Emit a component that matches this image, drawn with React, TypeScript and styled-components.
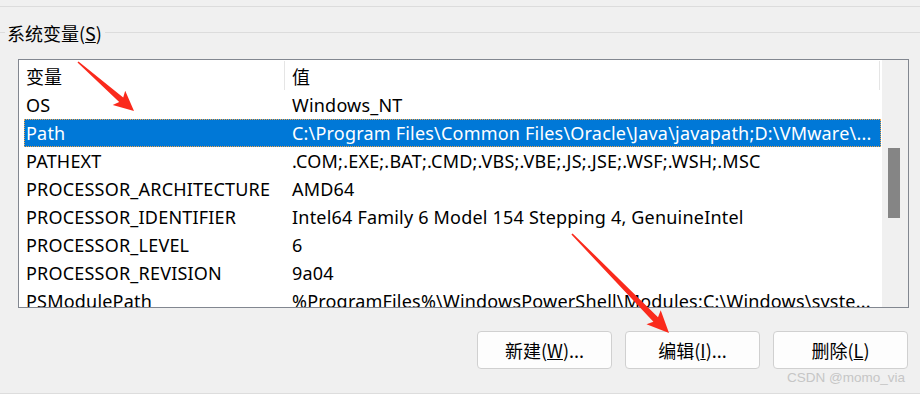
import React from "react";
import styled, { createGlobalStyle } from "styled-components";

const Global = createGlobalStyle`
  html, body { margin: 0; padding: 0; background: #f0f0f0; }
  body { font-family: "Noto Sans", "Noto Sans CJK SC", sans-serif; }
`;

const Page = styled.div`
  position: relative;
  width: 920px;
  height: 394px;
  box-sizing: border-box;
  background: #f0f0f0;
  border-bottom: 1px solid #dddddd;
  overflow: hidden;
  font-family: "Noto Sans", "Noto Sans CJK SC", sans-serif;
  font-size: 18px;
  color: #000;
`;

const TopRule = styled.div`
  height: 1px;
  margin-top: 6px;
  background: #dcdcdc;
`;

const GroupHeader = styled.div`
  display: flex;
  align-items: center;
  height: 18px;
  margin-top: 17px;
  &::before {
    content: "";
    width: 5px;
    height: 1px;
    margin-top: -2px;
    margin-right: 2px;
    background: #dcdcdc;
  }
  &::after {
    content: "";
    flex: 1;
    height: 1px;
    margin-top: -2px;
    margin-left: 3px;
    background: #dcdcdc;
  }
`;

const Legend = styled.span`
  font-family: "Noto Sans CJK SC", sans-serif;
  font-size: 18px;
  line-height: 18px;
  white-space: nowrap;
`;

const ListBox = styled.div`
  display: flex;
  box-sizing: border-box;
  width: 891px;
  height: 249px;
  margin: 17px 0 0 18px;
  border: 1px solid #828790;
  background: #ffffff;
  overflow: hidden;
`;

const ListArea = styled.div`
  flex: 1;
  min-width: 0;
  overflow: hidden;
`;

const HeaderRow = styled.div`
  display: grid;
  grid-template-columns: 266px 1fr;
  height: 31px;
  padding-right: 1px;
`;

const HeaderCell = styled.div`
  display: flex;
  align-items: center;
  padding-left: 7px;
  font-family: "Noto Sans CJK SC", sans-serif;
  font-size: 18px;
  border-right: 1px solid #e5e5e5;
  margin: 1px 0 1px;
`;

const Row = styled.div<{ $selected?: boolean }>`
  display: grid;
  grid-template-columns: 261px 1fr;
  box-sizing: border-box;
  height: 28px;
  margin-left: 5px;
  background: ${(p) => (p.$selected ? "#0078d7" : "transparent")};
  color: ${(p) => (p.$selected ? "#ffffff" : "#000000")};
  outline: ${(p) => (p.$selected ? "1px dotted #f3a649" : "none")};
  outline-offset: -1px;
`;

const Cell = styled.div<{ $value?: boolean }>`
  display: flex;
  align-items: center;
  padding-left: ${(p) => (p.$value ? "7px" : "2px")};
  white-space: nowrap;
  overflow: hidden;
  font-size: 18px;
  letter-spacing: 0.2px;
`;

const ScrollTrack = styled.div`
  position: relative;
  width: 26px;
  background: #f0f0f0;
  border-left: 1px solid #ffffff;
`;

const Thumb = styled.div`
  position: absolute;
  left: 6px;
  top: 88px;
  width: 12px;
  height: 70px;
  background: #858585;
`;

const ButtonRow = styled.div`
  display: flex;
  justify-content: flex-end;
  gap: 13px;
  margin-top: 23px;
  padding-right: 12px;
`;

const Button = styled.div`
  display: flex;
  align-items: center;
  justify-content: center;
  box-sizing: border-box;
  width: 135px;
  height: 38px;
  border: 1px solid #d0d0d0;
  border-radius: 4px;
  background: #fdfdfd;
  font-family: "Noto Sans CJK SC", sans-serif;
  font-size: 18px;
`;

const Watermark = styled.div`
  position: absolute;
  right: 15px;
  top: 370px;
  font-family: "Liberation Sans", Arial, sans-serif;
  font-size: 13.5px;
  color: #c6c6c6;
`;

const ArrowLayer = styled.svg`
  position: absolute;
  left: 0;
  top: 0;
  pointer-events: none;
`;

type Pt = [number, number];

function arrowPoints(tail: Pt, tip: Pt, headLen: number, headHalf: number, w0: number, w1: number): string {
  const dx = tip[0] - tail[0];
  const dy = tip[1] - tail[1];
  const len = Math.hypot(dx, dy);
  const ux = dx / len;
  const uy = dy / len;
  const nx = -uy;
  const ny = ux;
  const bx = tip[0] - ux * headLen;
  const by = tip[1] - uy * headLen;
  const back = 3;
  const pts: Pt[] = [
    [tail[0] + nx * w0, tail[1] + ny * w0],
    [bx + nx * w1, by + ny * w1],
    [bx - ux * back + nx * headHalf, by - uy * back + ny * headHalf],
    [tip[0], tip[1]],
    [bx - ux * back - nx * headHalf, by - uy * back - ny * headHalf],
    [bx - nx * w1, by - ny * w1],
    [tail[0] - nx * w0, tail[1] - ny * w0],
  ];
  return pts.map((p) => `${p[0].toFixed(1)},${p[1].toFixed(1)}`).join(" ");
}

const rows: { name: string; value: string; selected?: boolean }[] = [
  { name: "OS", value: "Windows_NT" },
  { name: "Path", value: "C:\\Program Files\\Common Files\\Oracle\\Java\\javapath;D:\\VMware\\...", selected: true },
  { name: "PATHEXT", value: ".COM;.EXE;.BAT;.CMD;.VBS;.VBE;.JS;.JSE;.WSF;.WSH;.MSC" },
  { name: "PROCESSOR_ARCHITECTURE", value: "AMD64" },
  { name: "PROCESSOR_IDENTIFIER", value: "Intel64 Family 6 Model 154 Stepping 4, GenuineIntel" },
  { name: "PROCESSOR_LEVEL", value: "6" },
  { name: "PROCESSOR_REVISION", value: "9a04" },
  { name: "PSModulePath", value: "%ProgramFiles%\\WindowsPowerShell\\Modules;C:\\Windows\\syste..." },
];

export default function App() {
  return (
    <Page>
      <Global />
      <TopRule />
      <GroupHeader>
        <Legend>
          系统变量(<u>S</u>)
        </Legend>
      </GroupHeader>
      <ListBox>
        <ListArea>
          <HeaderRow>
            <HeaderCell>变量</HeaderCell>
            <HeaderCell>值</HeaderCell>
          </HeaderRow>
          {rows.map((r) => (
            <Row key={r.name} $selected={r.selected}>
              <Cell>{r.name}</Cell>
              <Cell $value>{r.value}</Cell>
            </Row>
          ))}
        </ListArea>
        <ScrollTrack>
          <Thumb />
        </ScrollTrack>
      </ListBox>
      <ButtonRow>
        <Button>
          新建(<u>W</u>)...
        </Button>
        <Button>
          编辑(<u>I</u>)...
        </Button>
        <Button>
          删除(<u>L</u>)
        </Button>
      </ButtonRow>
      <Watermark>CSDN @momo_via</Watermark>
      <ArrowLayer width={920} height={394} viewBox="0 0 920 394">
        <polygon points={arrowPoints([78, 62], [134, 111], 17, 9.5, 0.8, 3)} fill="#fa2a1c" />
        <polygon points={arrowPoints([572, 234], [669, 333], 19, 10, 0.8, 3.2)} fill="#fa2a1c" />
      </ArrowLayer>
    </Page>
  );
}
